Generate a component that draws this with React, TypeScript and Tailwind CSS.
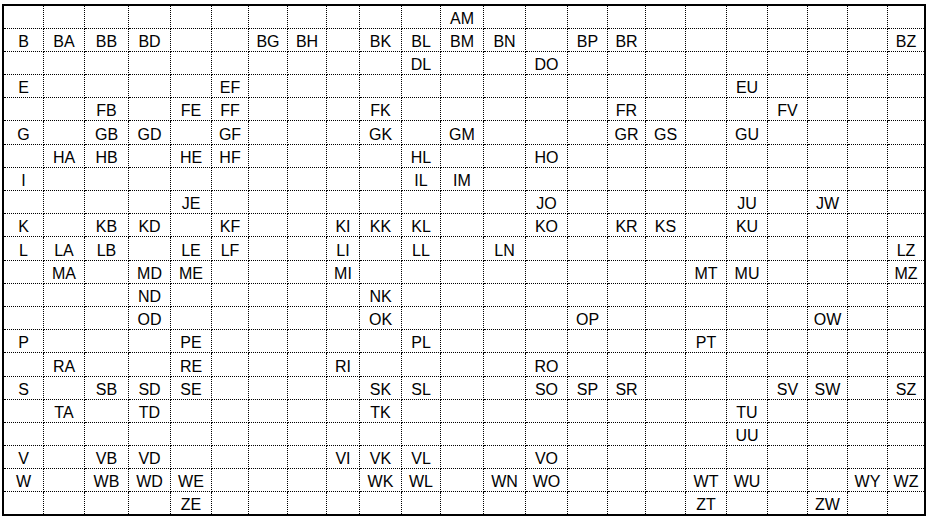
import React from 'react';

const COLS = ['', 'A', 'B', 'D', 'E', 'F', 'G', 'H', 'I', 'K', 'L', 'M', 'N', 'O', 'P', 'R', 'S', 'T', 'U', 'V', 'W', 'Y', 'Z'];

const ROWS: [string, string][] = [
  ['A', 'AM'],
  ['B', 'B BA BB BD BG BH BK BL BM BN BP BR BZ'],
  ['D', 'DL DO'],
  ['E', 'E EF EU'],
  ['F', 'FB FE FF FK FR FV'],
  ['G', 'G GB GD GF GK GM GR GS GU'],
  ['H', 'HA HB HE HF HL HO'],
  ['I', 'I IL IM'],
  ['J', 'JE JO JU JW'],
  ['K', 'K KB KD KF KI KK KL KO KR KS KU'],
  ['L', 'L LA LB LE LF LI LL LN LZ'],
  ['M', 'MA MD ME MI MT MU MZ'],
  ['N', 'ND NK'],
  ['O', 'OD OK OP OW'],
  ['P', 'P PE PL PT'],
  ['R', 'RA RE RI RO'],
  ['S', 'S SB SD SE SK SL SO SP SR SV SW SZ'],
  ['T', 'TA TD TK TU'],
  ['U', 'UU'],
  ['V', 'V VB VD VI VK VL VO'],
  ['W', 'W WB WD WE WK WL WN WO WT WU WY WZ'],
  ['Z', 'ZE ZT ZW'],
];

const App = () => {
  return (
    <div className="w-[930px] h-[520px] bg-white pt-[4px] pl-[2px]" style={{ fontFamily: '"Liberation Sans", Arial, sans-serif' }}>
      <div className="w-[924px] border-t-2 border-l-2 border-r-2 border-b-2 border-black grid grid-cols-[40px_41px_44px_42px_41px_37px_39px_39px_33px_42px_39px_43px_42px_42px_40px_38px_40px_41px_41px_40px_40px_40px_36px] grid-rows-[23px_23px_23px_23px_23px_24px_23px_23px_23px_23px_24px_23px_23px_23px_23px_24px_23px_23px_23px_23px_23px_22px]">
        {ROWS.map(([letter, codes], ri) => {
          const present = new Set(codes.split(' '));
          const lastRow = ri === ROWS.length - 1;
          return COLS.map((c, ci) => {
            const code = letter + c;
            const lastCol = ci === COLS.length - 1;
            return (
              <div
                key={`${ri}-${ci}`}
                className={`flex items-end justify-center border-dotted border-black ${lastCol ? '' : 'border-r'} ${lastRow ? '' : 'border-b'}`}
              >
                {present.has(code) && (
                  <span className="text-[16px] leading-[18px] text-black">{code}</span>
                )}
              </div>
            );
          });
        })}
      </div>
    </div>
  );
};

export default App;
